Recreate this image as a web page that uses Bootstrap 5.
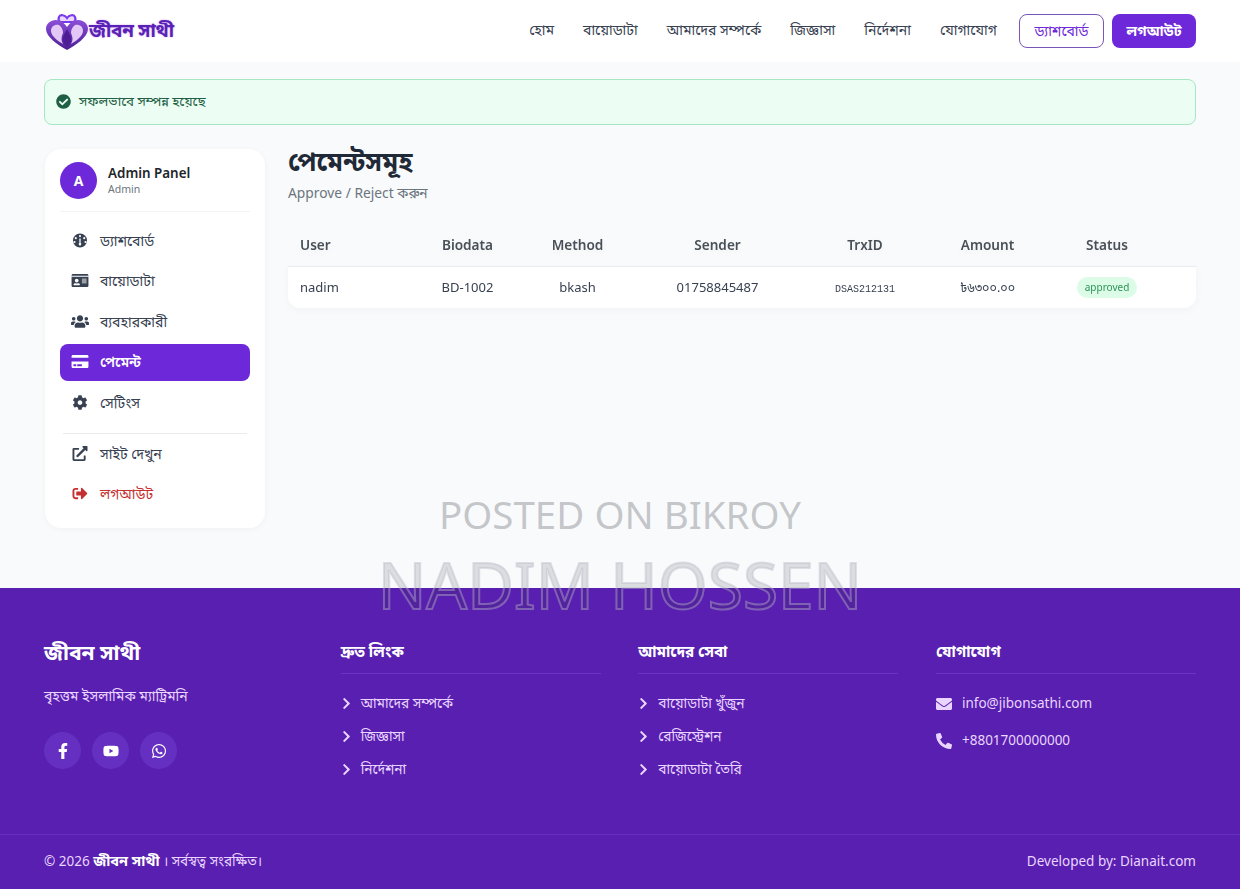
<!DOCTYPE html>
<html lang="bn">
<head>
    <meta charset="UTF-8">
    <meta name="viewport" content="width=device-width, initial-scale=1.0">
    <title>পেমেন্টসমূহ</title>
    <link href="https://cdn.jsdelivr.net/npm/bootstrap@5.3.0/dist/css/bootstrap.min.css" rel="stylesheet">
    <style>
        body {
            font-family: "Noto Sans", "Noto Sans Bengali", "Lohit Bengali", "Open Sans", sans-serif;
            background-color: #f8fafc;
            color: #212529;
            font-size: 14px;
            position: relative;
            min-height: 889px;
        }
        svg { fill: currentColor; flex-shrink: 0; }

        /* top bar */
        .top-bar { background: #fff; height: 62px; padding: 0 44px; }
        .brand-mark { width: 46px; height: 42px; }
        .brand-name {
            font-size: 18.8px;
            font-weight: 700;
            letter-spacing: -.2px;
            color: #5b21b6;
            text-shadow: 0 0 2px #c4a3f0;
            margin-left: -1px;
            padding-bottom: 2px;
        }
        .top-link { color: #374151; font-size: 14px; text-decoration: none; }
        .top-links { gap: 29px; margin-right: 22px; padding-bottom: 4px; }
        .btn-outline-brand, .btn-brand {
            font-size: 14px;
            height: 34px;
            padding: 0 14.5px 2px;
            border-radius: 8px;
            display: inline-flex;
            align-items: center;
        }
        .btn-outline-brand { border: 1px solid #7a55b8; color: #6d28d9; background: #fff; margin-right: 8px; }
        .btn-brand { background: #6d28d9; color: #fff; font-weight: 700; border: 0; }

        /* page */
        .page-wrap { padding: 17px 44px 60px; height: 526px; }
        .ok-box {
            height: 46px;
            background: #ecfdf3;
            border: 1px solid #a7e8c4;
            border-radius: 8px;
            color: #1f5f45;
            padding: 0 11px 1px;
            margin-bottom: 24px;
            font-size: 13.4px;
        }
        .side-box {
            width: 220px;
            height: 379px;
            margin-left: 1px;
            background: #fff;
            border-radius: 16px;
            box-shadow: 0 1px 6px rgba(0,0,0,.04);
            padding: 13px 15px;
            flex-shrink: 0;
        }
        .side-avatar {
            width: 37px; height: 37px;
            background: #6d28d9;
            color: #fff;
            font-weight: 700;
            font-size: 14px;
        }
        .side-head { gap: 11px; padding-bottom: 12px; border-bottom: 1px solid #f1f3f5; margin-bottom: 10px; }
        .side-title { font-size: 13.4px; font-weight: 600; line-height: 17px; color: #212529; }
        .side-sub { font-size: 10.5px; color: #6c757d; line-height: 14px; }
        .side-link {
            height: 37px;
            display: flex;
            align-items: center;
            padding: 0 11px 1px;
            margin-bottom: 3.6px;
            border-radius: 8px;
            color: #374151;
            text-decoration: none;
            font-size: 14px;
            gap: 11px;
        }
        .side-link svg { width: 18px; height: 15px; }
        .side-link.is-on { background: #6d28d9; color: #fff; font-weight: 600; }
        .side-link.is-danger { color: #c62f2f; }
        .side-line { border-top: 1px solid #e9ecef; margin: 12px 3px 1px; }

        .main-col { margin-left: 23px; flex-grow: 1; min-width: 0; }
        .page-title { font-size: 26px; font-weight: 700; color: #1f2937; line-height: 32px; margin: -4px 0 6px; }
        .page-sub { font-size: 13.8px; color: #6c757d; line-height: 20px; margin-bottom: 22px; }

        .pay-table {
            table-layout: fixed;
            width: 100%;
            margin: 0;
            font-size: 13px;
            border-collapse: separate;
            border-spacing: 0;
            filter: drop-shadow(0 2px 3px rgba(0,0,0,.03));
        }
        .pay-table th {
            background: transparent;
            color: #495057;
            font-size: 13.6px;
            font-weight: 600;
            height: 42px;
            padding: 0;
            vertical-align: middle;
            text-align: center;
            white-space: nowrap;
            border-bottom: 1px solid #e9ecef;
            box-shadow: none;
        }
        .pay-table td {
            background: #fff;
            height: 41px;
            padding: 0;
            vertical-align: middle;
            text-align: center;
            white-space: nowrap;
            color: #374151;
            border: 0;
            box-shadow: none;
        }
        .pay-table td:first-child { border-bottom-left-radius: 12px; text-align: left; padding-left: 12px; }
        .pay-table td:last-child { border-bottom-right-radius: 12px; }
        .pay-table th:first-child { text-align: left; padding-left: 12px; }
        .trx-code { font-family: "Liberation Mono", monospace; font-size: 10px; }
        .amount-text { font-size: 12.5px; }
        .status-pill {
            background: #dcfce7;
            color: #2f9358;
            font-size: 10px;
            border-radius: 50rem;
            padding: 3px 8px 4px;
            display: inline-block;
            line-height: 14px;
        }

        /* footer */
        .site-foot { background: #581fb0; height: 301px; color: #e9d5ff; }
        .foot-top { padding: 50px 44px 0; height: 246px; gap: 37.67px; }
        .foot-col { width: 260px; flex-shrink: 0; }
        .foot-col-first { width: 259px; }
        .foot-brand { color: #fff; font-size: 21px; font-weight: 700; line-height: 29px; margin-bottom: 19px; }
        .foot-text { font-size: 14px; line-height: 20px; margin-bottom: 26px; }
        .foot-socials { gap: 11px; }
        .foot-round {
            width: 37px; height: 37px;
            background: #652fc2;
            color: #fff;
        }
        .foot-round svg { width: 16px; height: 16px; }
        .foot-head {
            color: #fff;
            font-size: 15.2px;
            font-weight: 700;
            line-height: 24px;
            padding-bottom: 10px;
            border-bottom: 1px solid #6b35c4;
            margin: 1px 0 13px;
        }
        .foot-link { height: 33px; display: flex; align-items: center; gap: 10px; color: #e9d5ff; text-decoration: none; font-size: 13.7px; }
        .foot-link svg { width: 9px; height: 13px; margin-left: 1px; }
        .foot-contacts { margin-top: -2px; }
        .foot-contact { height: 37px; gap: 10px; color: #e9d5ff; font-size: 13.5px; }
        .foot-contact svg { width: 16px; height: 16px; }
        .foot-bottom { border-top: 1px solid #6430bd; padding: 0 44px 2px; height: 55px; font-size: 13.5px; }
        .foot-bottom strong { color: #fff; font-size: 14.5px; }

        /* marketplace watermark lying over the page */
        .stamp-line {
            position: absolute;
            left: 0; right: 0;
            text-align: center;
            font-family: "Noto Sans", sans-serif;
            pointer-events: none;
            white-space: nowrap;
        }
        .stamp-a { top: 487px; font-size: 38.5px; line-height: 54px; color: rgba(120,122,130,.42); }
        .stamp-b {
            top: 547px;
            font-size: 64px;
            line-height: 76px;
            color: rgba(60,60,65,.15);
            -webkit-text-stroke: 2px rgba(187,187,200,.42);
        }
    </style>
</head>
<body>

<svg width="0" height="0" class="position-absolute">
    <symbol id="i-check" viewBox="0 0 512 512"><path d="M504 256c0 136.967-111.033 248-248 248S8 392.967 8 256 119.033 8 256 8s248 111.033 248 248zM227.314 387.314l184-184c6.248-6.248 6.248-16.379 0-22.627l-22.627-22.627c-6.248-6.249-16.379-6.249-22.628 0L216 308.118l-70.059-70.059c-6.248-6.248-16.379-6.248-22.628 0l-22.627 22.627c-6.248 6.248-6.248 16.379 0 22.627l104 104c6.249 6.249 16.379 6.249 22.628.001z"/></symbol>
    <symbol id="i-gauge" viewBox="0 0 512 512"><path fill-rule="evenodd" d="M256 16a240 240 0 1 0 0 480 240 240 0 0 0 0-480zM256 70a36 36 0 1 1 0 72 36 36 0 0 1 0-72zM112 140a36 36 0 1 1 0 72 36 36 0 0 1 0-72zM400 140a36 36 0 1 1 0 72 36 36 0 0 1 0-72zM70 270a36 36 0 1 1 0 72 36 36 0 0 1 0-72zM442 270a36 36 0 1 1 0 72 36 36 0 0 1 0-72zM232 190h48l-4 150a44 44 0 1 1-40 0z"/></symbol>
    <symbol id="i-idcard" viewBox="0 0 576 512"><path d="M528 32H48C21.5 32 0 53.5 0 80v16h576V80c0-26.5-21.5-48-48-48zM0 432c0 26.5 21.5 48 48 48h480c26.5 0 48-21.5 48-48V128H0v304zm352-232c0-4.4 3.6-8 8-8h144c4.4 0 8 3.6 8 8v16c0 4.4-3.6 8-8 8H360c-4.4 0-8-3.6-8-8v-16zm0 64c0-4.4 3.6-8 8-8h144c4.4 0 8 3.6 8 8v16c0 4.4-3.6 8-8 8H360c-4.4 0-8-3.6-8-8v-16zm0 64c0-4.4 3.6-8 8-8h144c4.4 0 8 3.6 8 8v16c0 4.4-3.6 8-8 8H360c-4.4 0-8-3.6-8-8v-16zM176 192c35.3 0 64 28.7 64 64s-28.7 64-64 64-64-28.7-64-64 28.7-64 64-64zM67.1 396.2C75.5 370.5 99.6 352 128 352h8.2c12.3 5.1 25.7 8 39.8 8s27.6-2.9 39.8-8h8.2c28.4 0 52.5 18.5 60.9 44.2 3.2 9.9-5.2 19.8-15.6 19.8H82.7c-10.4 0-18.8-10-15.6-19.8z"/></symbol>
    <symbol id="i-users" viewBox="0 0 640 512"><path d="M96 224c35.3 0 64-28.7 64-64s-28.7-64-64-64-64 28.7-64 64 28.7 64 64 64zm448 0c35.3 0 64-28.7 64-64s-28.7-64-64-64-64 28.7-64 64 28.7 64 64 64zm32 32h-64c-17.6 0-33.5 7.1-45.1 18.6 40.3 22.1 68.9 62 75.1 109.4h66c17.7 0 32-14.3 32-32v-32c0-35.3-28.7-64-64-64zm-256 0c61.9 0 112-50.1 112-112S381.9 32 320 32 208 82.1 208 144s50.1 112 112 112zm76.8 32h-8.3c-20.8 10-43.9 16-68.5 16s-47.6-6-68.5-16h-8.3C179.6 288 128 339.6 128 403.2V432c0 26.5 21.5 48 48 48h288c26.5 0 48-21.5 48-48v-28.8c0-63.6-51.6-115.2-115.2-115.2zm-223.7-13.4C161.5 263.1 145.6 256 128 256H64c-35.3 0-64 28.7-64 64v32c0 17.7 14.3 32 32 32h65.9c6.3-47.4 34.9-87.3 75.2-109.4z"/></symbol>
    <symbol id="i-card" viewBox="0 0 576 512"><path d="M0 432c0 26.5 21.5 48 48 48h480c26.5 0 48-21.5 48-48V256H0v176zm192-68c0-6.6 5.4-12 12-12h136c6.6 0 12 5.4 12 12v40c0 6.6-5.4 12-12 12H204c-6.6 0-12-5.4-12-12v-40zm-128 0c0-6.6 5.4-12 12-12h72c6.6 0 12 5.4 12 12v40c0 6.6-5.4 12-12 12H76c-6.6 0-12-5.4-12-12v-40zM576 80v48H0V80c0-26.5 21.5-48 48-48h480c26.5 0 48 21.5 48 48z"/></symbol>
    <symbol id="i-cog" viewBox="0 0 512 512"><path d="M487.4 315.7l-42.6-24.6c4.3-23.2 4.3-47 0-70.2l42.6-24.6c4.9-2.8 7.1-8.6 5.5-14-11.1-35.6-30-67.8-54.7-94.6-3.8-4.1-10-5.1-14.8-2.3L380.8 110c-17.9-15.4-38.5-27.3-60.8-35.1V25.8c0-5.6-3.9-10.5-9.4-11.7-36.7-8.2-74.3-7.8-109.2 0-5.5 1.2-9.4 6.1-9.4 11.7V75c-22.2 7.9-42.8 19.8-60.8 35.1L88.7 85.5c-4.9-2.8-11-1.9-14.8 2.3-24.7 26.7-43.6 58.9-54.7 94.6-1.7 5.4.6 11.2 5.5 14L67.3 221c-4.3 23.2-4.3 47 0 70.2l-42.6 24.6c-4.9 2.8-7.1 8.6-5.5 14 11.1 35.6 30 67.8 54.7 94.6 3.8 4.1 10 5.1 14.8 2.3l42.6-24.6c17.9 15.4 38.5 27.3 60.8 35.1v49.2c0 5.6 3.9 10.5 9.4 11.7 36.7 8.2 74.3 7.8 109.2 0 5.5-1.2 9.4-6.1 9.4-11.7v-49.2c22.2-7.9 42.8-19.8 60.8-35.1l42.6 24.6c4.9 2.8 11 1.9 14.8-2.3 24.7-26.7 43.6-58.9 54.7-94.6 1.5-5.5-.7-11.3-5.6-14.1zM256 336c-44.1 0-80-35.9-80-80s35.9-80 80-80 80 35.9 80 80-35.9 80-80 80z"/></symbol>
    <symbol id="i-ext" viewBox="0 0 512 512"><path d="M432,320H400a16,16,0,0,0-16,16V448H64V128H208a16,16,0,0,0,16-16V80a16,16,0,0,0-16-16H48A48,48,0,0,0,0,112V464a48,48,0,0,0,48,48H400a48,48,0,0,0,48-48V336A16,16,0,0,0,432,320ZM488,0h-128c-21.37,0-32.05,25.91-17,41l35.73,35.73L135,320.37a24,24,0,0,0,0,34L157.67,377a24,24,0,0,0,34,0L435.28,133.32,471,169c15,15,41,4.5,41-17V24A24,24,0,0,0,488,0Z"/></symbol>
    <symbol id="i-out" viewBox="0 0 512 512"><path d="M497 273L329 441c-15 15-41 4.5-41-17v-96H152c-13.3 0-24-10.7-24-24v-96c0-13.3 10.7-24 24-24h136V88c0-21.4 25.9-32 41-17l168 168c9.3 9.4 9.3 24.6 0 34zM192 436v-40c0-6.6-5.4-12-12-12H96c-17.7 0-32-14.3-32-32V160c0-17.7 14.3-32 32-32h84c6.6 0 12-5.4 12-12V76c0-6.6-5.4-12-12-12H96c-53 0-96 43-96 96v192c0 53 43 96 96 96h84c6.6 0 12-5.4 12-12z"/></symbol>
    <symbol id="i-fb" viewBox="0 0 320 512"><path d="M279.14 288l14.22-92.66h-88.91v-60.13c0-25.35 12.42-50.06 52.24-50.06h40.42V6.26S260.43 0 225.36 0c-73.22 0-121.08 44.38-121.08 124.72v70.62H22.89V288h81.39v224h100.17V288z"/></symbol>
    <symbol id="i-yt" viewBox="0 0 576 512"><path d="M549.655 124.083c-6.281-23.65-24.787-42.276-48.284-48.597C458.781 64 288 64 288 64S117.22 64 74.629 75.486c-23.497 6.322-42.003 24.947-48.284 48.597-11.412 42.867-11.412 132.305-11.412 132.305s0 89.438 11.412 132.305c6.281 23.65 24.787 41.5 48.284 47.821C117.22 448 288 448 288 448s170.78 0 213.371-11.486c23.497-6.321 42.003-24.171 48.284-47.821 11.412-42.867 11.412-132.305 11.412-132.305s0-89.438-11.412-132.305zm-317.51 213.508V175.185l142.739 81.205-142.739 81.201z"/></symbol>
    <symbol id="i-wa" viewBox="0 0 448 512"><path d="M380.9 97.1C339 55.1 283.2 32 223.9 32c-122.4 0-222 99.6-222 222 0 39.1 10.2 77.3 29.6 111L0 480l117.7-30.9c32.4 17.7 68.9 27 106.1 27h.1c122.3 0 224.1-99.6 224.1-222 0-59.3-25.2-115-67.1-157zm-157 341.6c-33.2 0-65.7-8.9-94-25.7l-6.7-4-69.8 18.3L72 359.2l-4.4-7c-18.5-29.4-28.2-63.3-28.2-98.2 0-101.7 82.8-184.5 184.6-184.5 49.3 0 95.6 19.2 130.4 54.1 34.8 34.9 56.2 81.2 56.1 130.5 0 101.8-84.9 184.6-186.6 184.6zm101.2-138.2c-5.5-2.8-32.8-16.2-37.9-18-5.1-1.9-8.8-2.8-12.5 2.8-3.7 5.6-14.3 18-17.6 21.8-3.2 3.7-6.5 4.2-12 1.4-32.6-16.3-54-29.1-75.5-66-5.7-9.8 5.7-9.1 16.3-30.3 1.8-3.7.9-6.9-.5-9.7-1.4-2.8-12.5-30.1-17.1-41.2-4.5-10.8-9.1-9.3-12.5-9.5-3.2-.2-6.9-.2-10.6-.2-3.7 0-9.7 1.4-14.8 6.9-5.1 5.6-19.4 19-19.4 46.3 0 27.3 19.9 53.7 22.6 57.4 2.8 3.7 39.1 59.7 94.8 83.8 35.2 15.2 49 16.5 66.6 13.9 10.7-1.6 32.8-13.4 37.4-26.4 4.6-13 4.6-24.1 3.2-26.4-1.3-2.5-5-3.9-10.5-6.6z"/></symbol>
    <symbol id="i-chev" viewBox="0 0 320 512"><path d="M285.476 272.971L91.132 467.314c-9.373 9.373-24.569 9.373-33.941 0l-22.667-22.667c-9.357-9.357-9.375-24.522-.04-33.901L188.505 256 34.484 101.255c-9.335-9.379-9.317-24.544.04-33.901l22.667-22.667c9.373-9.373 24.569-9.373 33.941 0L285.475 239.03c9.373 9.372 9.373 24.568.001 33.941z"/></symbol>
    <symbol id="i-mail" viewBox="0 0 512 512"><path d="M502.3 190.8c3.9-3.1 9.7-.2 9.7 4.7V400c0 26.5-21.5 48-48 48H48c-26.5 0-48-21.5-48-48V195.6c0-5 5.7-7.8 9.7-4.7 22.4 17.4 52.1 39.5 154.1 113.6 21.1 15.4 56.7 47.8 92.2 47.6 35.7.3 72-32.8 92.3-47.6 102-74.1 131.6-96.3 154-113.7zM256 320c23.2.4 56.6-29.2 73.4-41.4 132.7-96.3 142.8-104.7 173.4-128.7 5.8-4.5 9.2-11.5 9.2-18.9v-19c0-26.5-21.5-48-48-48H48C21.5 64 0 85.5 0 112v19c0 7.4 3.4 14.3 9.2 18.9 30.6 23.9 40.7 32.4 173.4 128.7 16.8 12.2 50.2 41.8 73.4 41.4z"/></symbol>
    <symbol id="i-phone" viewBox="0 0 512 512"><path d="M497.39 361.8l-112-48a24 24 0 0 0-28 6.9l-49.6 60.6A370.66 370.66 0 0 1 130.6 204.11l60.6-49.6a23.94 23.94 0 0 0 6.9-28l-48-112A24.16 24.16 0 0 0 122.6.61l-104 24A24 24 0 0 0 0 48c0 256.5 207.9 464 464 464a24 24 0 0 0 23.4-18.6l24-104a24.29 24.29 0 0 0-14.01-27.6z"/></symbol>
</svg>

<nav class="top-bar d-flex align-items-center justify-content-between">
    <a href="#" class="d-flex align-items-center text-decoration-none">
        <svg class="brand-mark" viewBox="0 0 46 42">
            <defs>
                <linearGradient id="heartFill" x1="0" y1="0" x2="0" y2="1">
                    <stop offset="0" stop-color="#8b4fd8"/>
                    <stop offset="1" stop-color="#4c1d95"/>
                </linearGradient>
            </defs>
            <path d="M23 8c-2-3-7-4-8-1-1 2 0 4 1 5h14c1-1 2-3 1-5-1-3-6-2-8 1z" fill="#e9d8fb" stroke="#7c3aed" stroke-width="2.2"/>
            <path d="M23 40C14 35 2 27 2 19 2 12 10 8 16 11c3 1 5 3 7 6 2-3 4-5 7-6 6-3 14 1 14 8 0 8-12 16-21 21z" fill="url(#heartFill)"/>
            <path d="M15 15c-4-1-8 1-8 6 0 5 7 10 12 13-2-3-2-7 0-11 0-3-1-6-4-8zM31 15c4-1 8 1 8 6 0 5-7 10-12 13 2-3 2-7 0-11 0-3 1-6 4-8z" fill="#e3c8f7"/>
            <path d="M23 19c2 4 5 8 4 12-1 3-3 5-4 6-1-1-3-3-4-6-1-4 2-8 4-12z" fill="#4c1d95"/>
        </svg>
        <span class="brand-name">জীবন সাথী</span>
    </a>
    <div class="d-flex align-items-center">
        <div class="top-links d-flex">
            <a href="#" class="top-link">হোম</a>
            <a href="#" class="top-link">বায়োডাটা</a>
            <a href="#" class="top-link">আমাদের সম্পর্কে</a>
            <a href="#" class="top-link">জিজ্ঞাসা</a>
            <a href="#" class="top-link">নির্দেশনা</a>
            <a href="#" class="top-link">যোগাযোগ</a>
        </div>
        <a href="#" class="btn btn-outline-brand">ড্যাশবোর্ড</a>
        <a href="#" class="btn btn-brand">লগআউট</a>
    </div>
</nav>

<div class="page-wrap">
    <div class="ok-box d-flex align-items-center gap-2">
        <svg width="15" height="15"><use href="#i-check"/></svg>
        <span>সফলভাবে সম্পন্ন হয়েছে</span>
    </div>

    <div class="d-flex align-items-start">
        <aside class="side-box">
            <div class="side-head d-flex align-items-center">
                <div class="side-avatar rounded-circle d-flex align-items-center justify-content-center">A</div>
                <div>
                    <div class="side-title">Admin Panel</div>
                    <div class="side-sub">Admin</div>
                </div>
            </div>
            <a href="#" class="side-link"><svg><use href="#i-gauge"/></svg>ড্যাশবোর্ড</a>
            <a href="#" class="side-link"><svg><use href="#i-idcard"/></svg>বায়োডাটা</a>
            <a href="#" class="side-link"><svg><use href="#i-users"/></svg>ব্যবহারকারী</a>
            <a href="#" class="side-link is-on"><svg><use href="#i-card"/></svg>পেমেন্ট</a>
            <a href="#" class="side-link"><svg><use href="#i-cog"/></svg>সেটিংস</a>
            <div class="side-line"></div>
            <a href="#" class="side-link"><svg><use href="#i-ext"/></svg>সাইট দেখুন</a>
            <a href="#" class="side-link is-danger"><svg><use href="#i-out"/></svg>লগআউট</a>
        </aside>

        <main class="main-col">
            <h1 class="page-title">পেমেন্টসমূহ</h1>
            <p class="page-sub">Approve / Reject করুন</p>
            <table class="table pay-table">
                <colgroup>
                    <col style="width:142px"><col style="width:75px"><col style="width:145px"><col style="width:135px">
                    <col style="width:160px"><col style="width:85px"><col style="width:154px"><col style="width:12px">
                </colgroup>
                <thead>
                    <tr>
                        <th>User</th><th>Biodata</th><th>Method</th><th>Sender</th>
                        <th>TrxID</th><th>Amount</th><th>Status</th><th></th>
                    </tr>
                </thead>
                <tbody>
                    <tr>
                        <td>nadim</td>
                        <td>BD-1002</td>
                        <td>bkash</td>
                        <td>01758845487</td>
                        <td><span class="trx-code">DSAS212131</span></td>
                        <td><span class="amount-text">৳৬৩০০.০০</span></td>
                        <td><span class="status-pill">approved</span></td>
                        <td></td>
                    </tr>
                </tbody>
            </table>
        </main>
    </div>
</div>

<footer class="site-foot">
    <div class="foot-top d-flex">
        <div class="foot-col foot-col-first">
            <div class="foot-brand">জীবন সাথী</div>
            <p class="foot-text">বৃহত্তম ইসলামিক ম্যাট্রিমনি</p>
            <div class="foot-socials d-flex">
                <a href="#" class="foot-round rounded-circle d-flex align-items-center justify-content-center"><svg><use href="#i-fb"/></svg></a>
                <a href="#" class="foot-round rounded-circle d-flex align-items-center justify-content-center"><svg><use href="#i-yt"/></svg></a>
                <a href="#" class="foot-round rounded-circle d-flex align-items-center justify-content-center"><svg><use href="#i-wa"/></svg></a>
            </div>
        </div>
        <div class="foot-col">
            <div class="foot-head">দ্রুত লিংক</div>
            <a href="#" class="foot-link"><svg><use href="#i-chev"/></svg>আমাদের সম্পর্কে</a>
            <a href="#" class="foot-link"><svg><use href="#i-chev"/></svg>জিজ্ঞাসা</a>
            <a href="#" class="foot-link"><svg><use href="#i-chev"/></svg>নির্দেশনা</a>
        </div>
        <div class="foot-col">
            <div class="foot-head">আমাদের সেবা</div>
            <a href="#" class="foot-link"><svg><use href="#i-chev"/></svg>বায়োডাটা খুঁজুন</a>
            <a href="#" class="foot-link"><svg><use href="#i-chev"/></svg>রেজিস্ট্রেশন</a>
            <a href="#" class="foot-link"><svg><use href="#i-chev"/></svg>বায়োডাটা তৈরি</a>
        </div>
        <div class="foot-col">
            <div class="foot-head">যোগাযোগ</div>
            <div class="foot-contacts">
                <div class="foot-contact d-flex align-items-center"><svg><use href="#i-mail"/></svg>info@jibonsathi.com</div>
                <div class="foot-contact d-flex align-items-center"><svg><use href="#i-phone"/></svg>+8801700000000</div>
            </div>
        </div>
    </div>
    <div class="foot-bottom d-flex align-items-center justify-content-between">
        <div>© 2026 <strong>জীবন সাথী</strong> । সর্বস্বত্ব সংরক্ষিত।</div>
        <div>Developed by: Dianait.com</div>
    </div>
</footer>

<div class="stamp-line stamp-a">POSTED ON BIKROY</div>
<div class="stamp-line stamp-b">NADIM HOSSEN</div>

<script src="https://cdn.jsdelivr.net/npm/bootstrap@5.3.0/dist/js/bootstrap.bundle.min.js"></script>
</body>
</html>
